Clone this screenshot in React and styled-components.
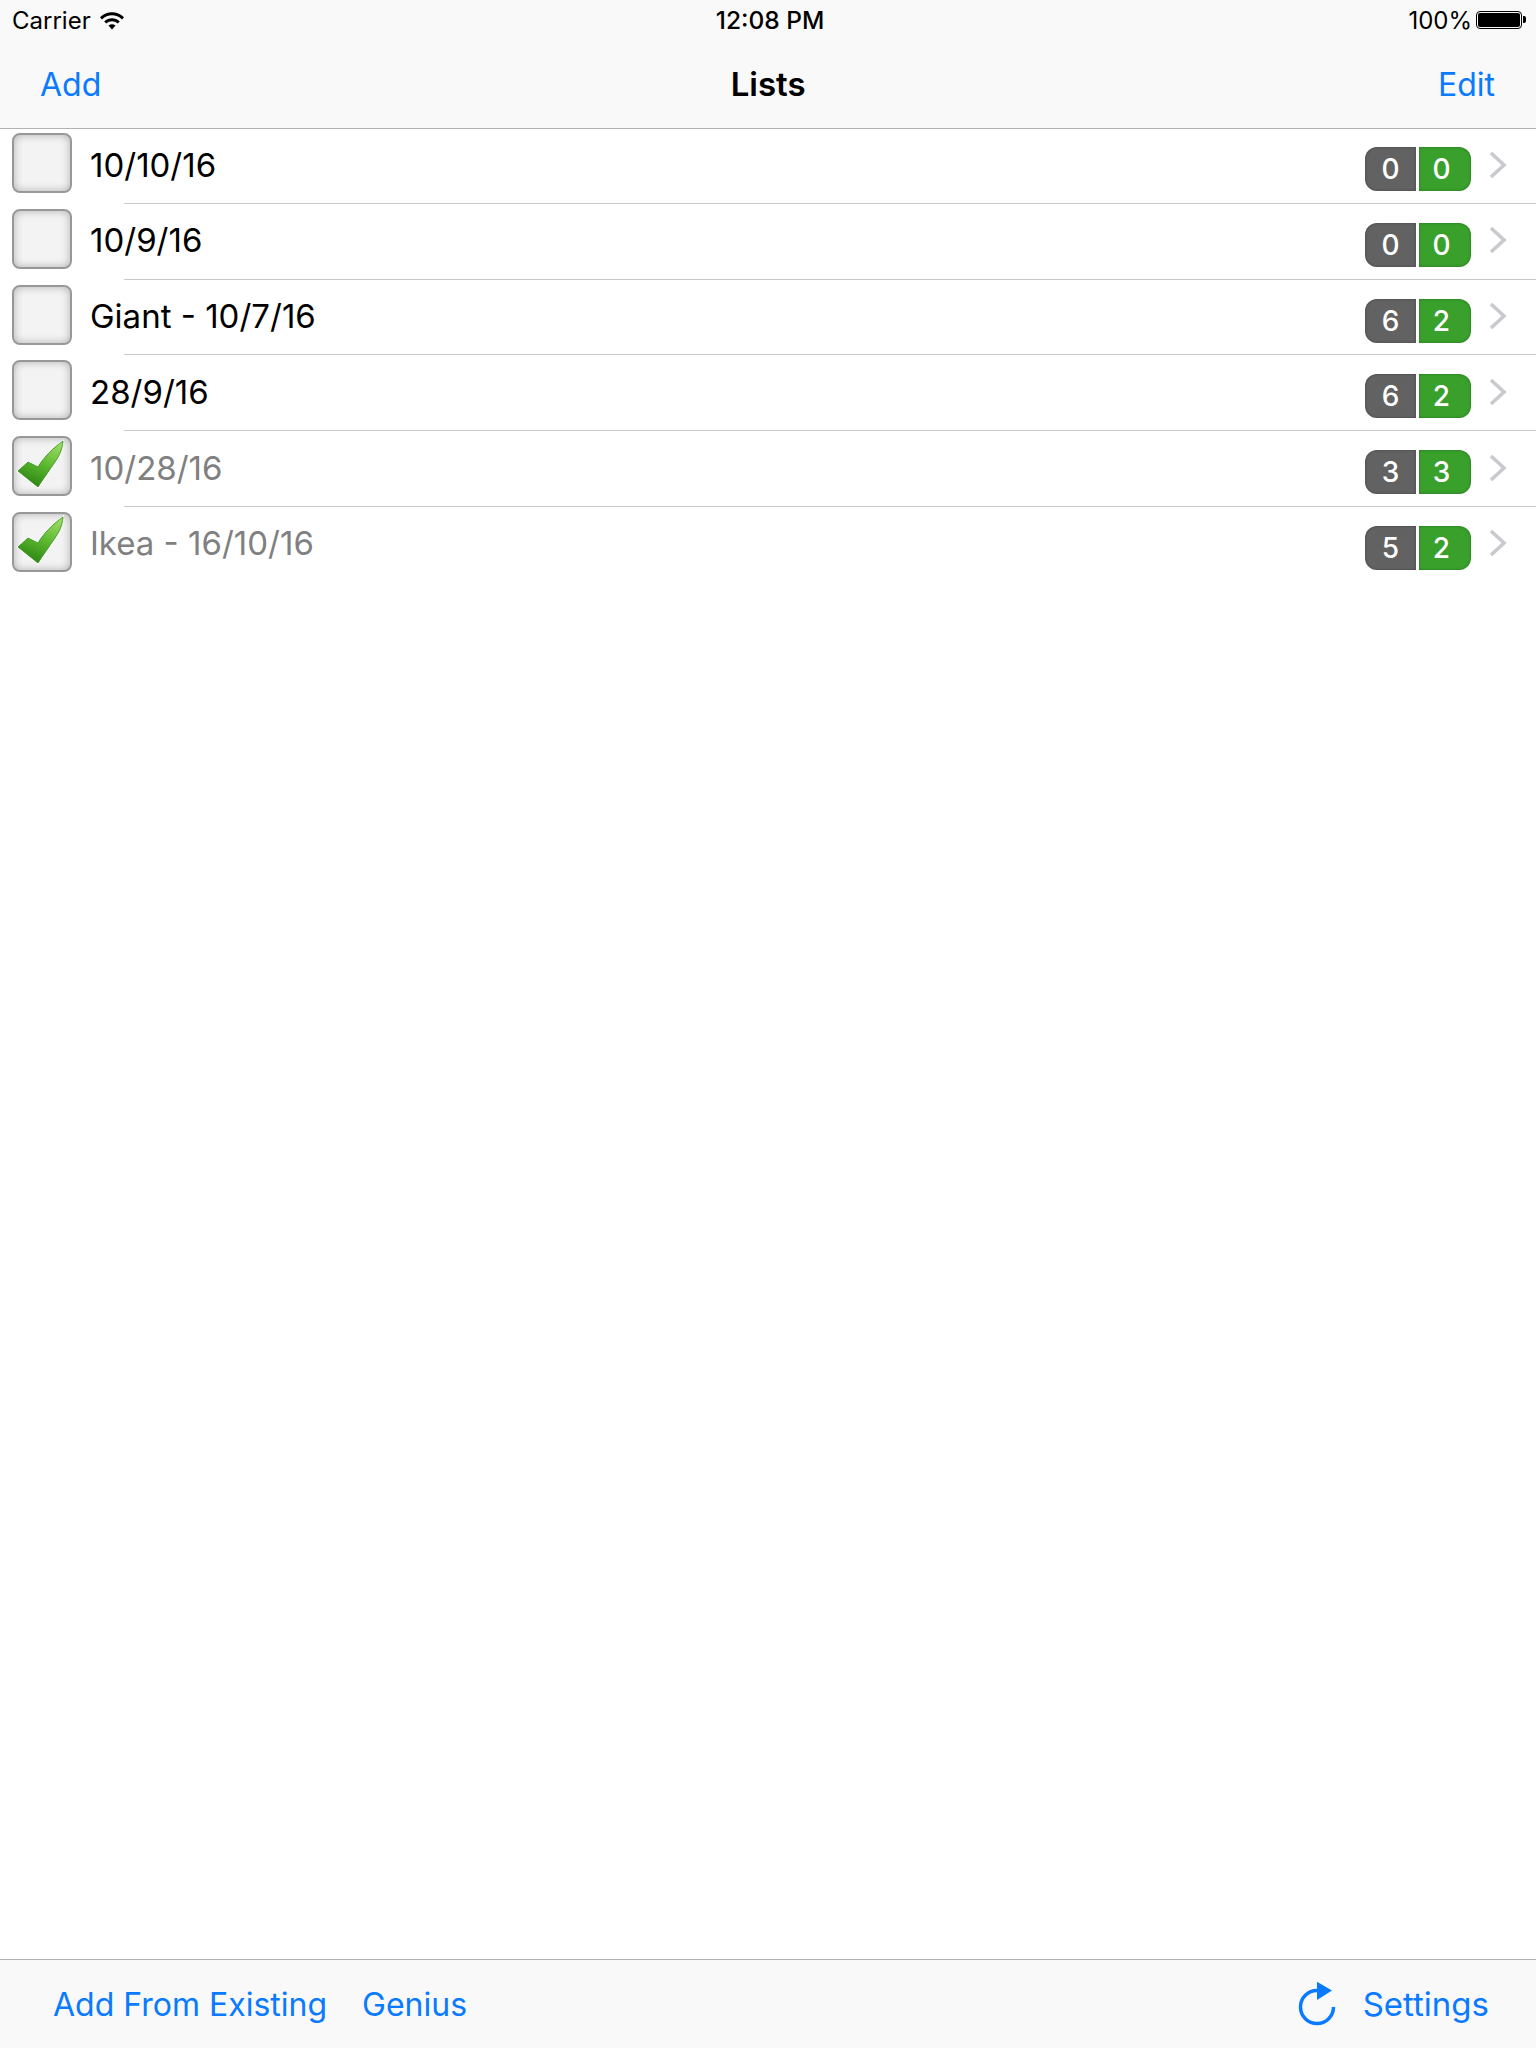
import React from "react";
import styled, { createGlobalStyle } from "styled-components";

const GlobalStyle = createGlobalStyle`
  html, body { margin: 0; padding: 0; background: #fff; }
  body { font-family: Inter, "Liberation Sans", sans-serif; }
`;

const lists = [
  { name: "10/10/16", left: 0, right: 0 },
  { name: "10/9/16", left: 0, right: 0 },
  { name: "Giant - 10/7/16", left: 6, right: 2 },
  { name: "28/9/16", left: 6, right: 2 },
  { name: "10/28/16", left: 3, right: 3, done: true },
  { name: "Ikea - 16/10/16", left: 5, right: 2, done: true },
];

function WifiIcon() {
  return (
    <svg width="26" height="20" viewBox="0 0 26 20">
      <path d="M1 7.2C7.8.6 18.2.6 25 7.2l-2 2.2C17.2 3.900 8.800 3.900 3 9.400z" fill="#000" />
      <path d="M5.200 11.400c4.600-4.300 11-4.300 15.600 0l-2.100 2.200c-3.400-3-8-3-11.400 0z" fill="#000" />
      <path d="M9.500 15.600c2.200-1.700 4.800-1.700 7 0L13 19.400z" fill="#000" />
    </svg>
  );
}

function CheckMark() {
  return (
    <CheckSvg viewBox="0 0 60 60">
      <defs>
        <linearGradient id="tick" x1="0.75" y1="0" x2="0.35" y2="1">
          <stop offset="0" stopColor="#9bdc62" />
          <stop offset="0.5" stopColor="#5cb82f" />
          <stop offset="1" stopColor="#2c8412" />
        </linearGradient>
      </defs>
      <path
        d="M52 3C51 15 48 20 44 27C38 36 32 44 26.500 53L4 35L16 25L26 29.500C32 20 41 11 52 3Z"
        fill="#fff"
        fillOpacity="0.85"
      />
      <path
        d="M51 5C50 15 47 20 43 26C37 35 31 43 26 51L6 35L16 26L26 31C32 21 41 12 51 5Z"
        fill="url(#tick)"
        stroke="#2f8a14"
        strokeWidth="0.800"
      />
    </CheckSvg>
  );
}

function Chevron() {
  return (
    <ChevronSvg viewBox="0 0 18 28">
      <path d="M2 2l13 12L2 26" fill="none" stroke="#c9c9ce" strokeWidth="3.600" />
    </ChevronSvg>
  );
}

function SyncIcon() {
  return (
    <svg width="40" height="46" viewBox="0 0 40 46">
      <path
        d="M20 9.500A16.500 16.500 0 1 0 36.500 26"
        fill="none"
        stroke="#0a7aff"
        strokeWidth="3.500"
      />
      <path d="M20 .7L35 9.500L20 19z" fill="#0a7aff" />
    </svg>
  );
}

export default function App() {
  return (
    <>
      <GlobalStyle />
      <Page>
        <TopBar>
          <StatusBar>
            <StatusLeft>
              <span>Carrier</span>
              <WifiIcon />
            </StatusLeft>
            <Clock>12:08 PM</Clock>
            <StatusRight>
              <span>100%</span>
              <Battery>
                <BatteryFill />
              </Battery>
            </StatusRight>
          </StatusBar>
          <NavBar>
            <NavLink>Add</NavLink>
            <NavTitle>Lists</NavTitle>
            <NavLink>Edit</NavLink>
          </NavBar>
        </TopBar>

        <ListArea>
          {lists.map((item, i) => (
            <Row key={item.name} $last={i === lists.length - 1}>
              <CheckBox>{item.done && <CheckMark />}</CheckBox>
              <RowName $done={item.done}>{item.name}</RowName>
              <Counts>
                <Count $kind="left">{item.left}</Count>
                <Count $kind="right">{item.right}</Count>
              </Counts>
              <Chevron />
            </Row>
          ))}
        </ListArea>

        <ToolBar>
          <ToolGroup $gap={35}>
            <ToolLink>Add From Existing</ToolLink>
            <ToolLink>Genius</ToolLink>
          </ToolGroup>
          <ToolGroup $gap={26}>
            <SyncIcon />
            <ToolLink $wide>Settings</ToolLink>
          </ToolGroup>
        </ToolBar>
      </Page>
    </>
  );
}

const Page = styled.div`
  width: 1536px;
  height: 2048px;
  display: flex;
  flex-direction: column;
  overflow: hidden;
  color: #000;
`;
const TopBar = styled.header`
  height: 128px;
  background: #f9f9f9;
  border-bottom: 1px solid #b2b2b2;
  flex: none;
`;
const StatusBar = styled.div`
  height: 40px;
  padding: 0 11px 0 12px;
  display: grid;
  grid-template-columns: 1fr auto 1fr;
  align-items: center;
  font-size: 24px;
`;
const StatusLeft = styled.div`
  display: flex;
  align-items: center;
  gap: 8px;
`;
const Clock = styled.div`
  font-size: 24.500px;
  font-weight: 500;
  padding-left: 3px;
`;
const StatusRight = styled.div`
  display: flex;
  align-items: center;
  justify-content: flex-end;
  gap: 4px;
`;
const Battery = styled.div`
  position: relative;
  width: 46px;
  height: 18px;
  box-sizing: border-box;
  border: 1px solid #000;
  border-radius: 4px;
  padding: 1px;
  margin-right: 3px;
  &::after {
    content: "";
    position: absolute;
    right: -5px;
    top: 4px;
    width: 3px;
    height: 7px;
    background: #000;
    border-radius: 0 2px 2px 0;
  }
`;
const BatteryFill = styled.div`
  height: 100%;
  background: #000;
  border-radius: 2px;
`;
const NavBar = styled.nav`
  height: 88px;
  padding: 0 41px 0 40px;
  display: flex;
  align-items: center;
  justify-content: space-between;
`;
const NavLink = styled.span`
  font-size: 32px;
  color: #0a7aff;
`;
const NavTitle = styled.h1`
  margin: 0 3px 0 0;
  font-size: 33px;
  font-weight: 600;
`;
const ListArea = styled.main`
  flex: 1;
`;
const Row = styled.div`
  position: relative;
  height: 75.750px;
  box-sizing: border-box;
  padding: 4px 29px 11.750px 12px;
  display: flex;
  align-items: center;
  &::after {
    content: "";
    display: ${(p) => (p.$last ? "none" : "block")};
    position: absolute;
    left: 124px;
    right: 0;
    bottom: 1px;
    height: 1px;
    background: #c8c7cc;
  }
`;
const CheckBox = styled.div`
  position: relative;
  flex: none;
  width: 60px;
  height: 60px;
  box-sizing: border-box;
  border: 2px solid #989898;
  border-radius: 8px;
  background: #f3f3f3;
  box-shadow: inset 0 0 8px rgba(0, 0, 0, 0.28);
`;
const CheckSvg = styled.svg`
  position: absolute;
  left: -2px;
  top: -2px;
  width: 60px;
  height: 60px;
`;
const RowName = styled.div`
  flex: 1;
  margin-left: 18px;
  padding-top: 3px;
  font-size: 33px;
  color: ${(p) => (p.$done ? "#808080" : "#000")};
`;
const Counts = styled.div`
  display: flex;
  gap: 3px;
  margin-top: 12px;
  margin-right: 18px;
`;
const Count = styled.div`
  height: 44px;
  box-sizing: border-box;
  display: flex;
  align-items: center;
  justify-content: center;
  font-size: 28px;
  font-weight: 500;
  color: #fff;
  width: ${(p) => (p.$kind === "left" ? "51px" : "52px")};
  padding-right: ${(p) => (p.$kind === "left" ? "0" : "7px")};
  background: ${(p) => (p.$kind === "left" ? "#626262" : "#39a02c")};
  border-radius: ${(p) => (p.$kind === "left" ? "12px 0 0 12px" : "0 12px 12px 0")};
  box-shadow: inset 0 0 3px rgba(0, 0, 0, 0.3);
`;
const ChevronSvg = styled.svg`
  flex: none;
  width: 18px;
  height: 28px;
  margin-top: 3px;
`;
const ToolBar = styled.footer`
  height: 88px;
  flex: none;
  background: #f9f9f9;
  border-top: 1px solid #b2b2b2;
  padding: 0 47px 0 53px;
  display: flex;
  align-items: center;
  justify-content: space-between;
`;
const ToolGroup = styled.div`
  display: flex;
  align-items: center;
  gap: ${(p) => p.$gap}px;
`;
const ToolLink = styled.span`
  font-size: ${(p) => (p.$wide ? "33px" : "32px")};
  color: #0a7aff;
`;
